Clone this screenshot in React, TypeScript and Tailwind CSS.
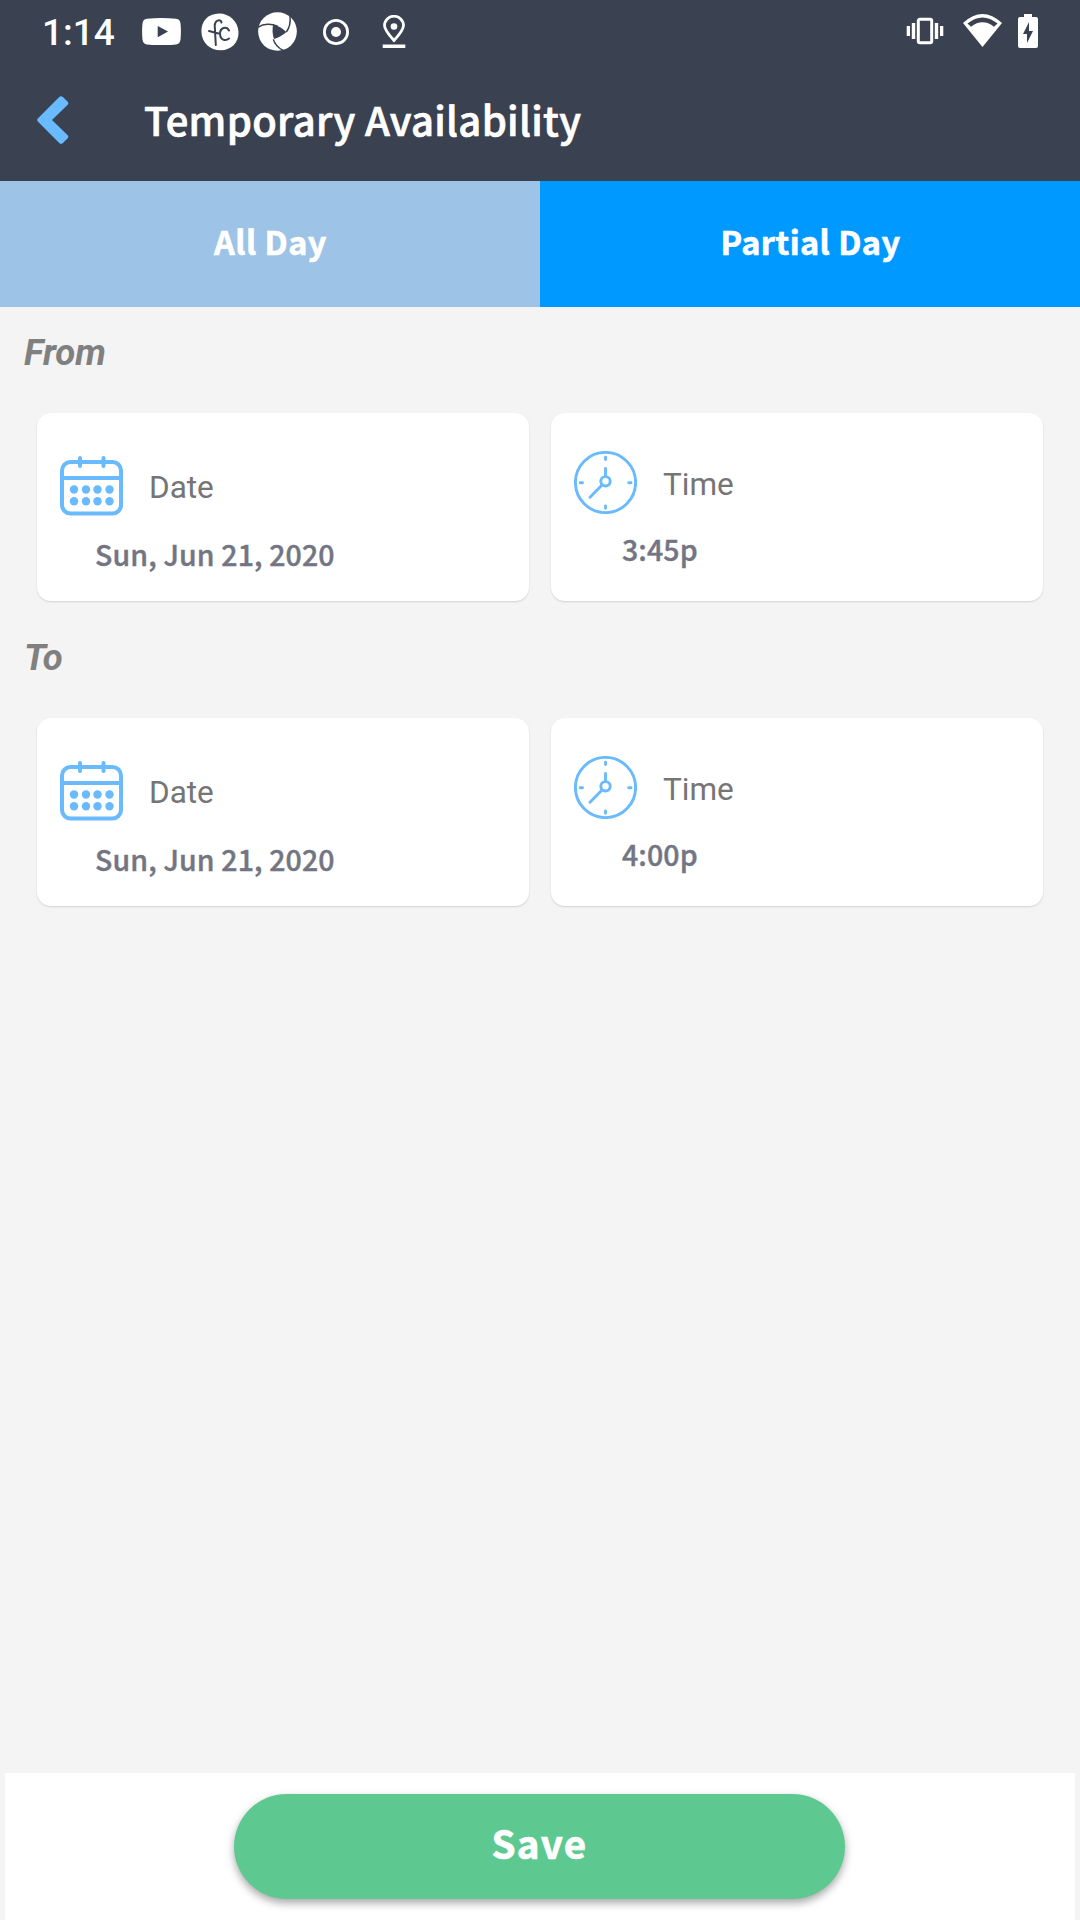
const cjk = "font-['Noto_Sans_CJK_SC',sans-serif]";

function StatusBar() {
  return (
    <div className="flex h-[63px] items-start pl-[42px] text-white">
      <span className="mt-[11px] w-[100px] text-[37px] leading-[44px] font-medium">1:14</span>
      <svg className="mt-[18px] h-[27px] w-[39px]" viewBox="0 0 39 27">
        <path fill="currentColor" fillRule="evenodd" d="M5 .7Q19.500-.7 34 .7 38 1 38.500 5.500 39.300 13.500 38.500 21.500 38 26 34 26.400 19.500 27.700 5 26.400 1 26 .5 21.500-.3 13.500.5 5.500 1 1 5 .7ZM15.700 8V19.300L26 13.600Z" />
      </svg>
      <svg className="mt-[13px] ml-5 h-[38px] w-[38px]" viewBox="0 0 38 38">
        <path fill="currentColor" d="M18 .4C28 .2 37 8 37.500 19 37.800 30 30 37 20 37.300 9 37.500 1 30 .4 19 0 8 7 .7 18 .4Z" />
        <g fill="none" stroke="#3a4150" strokeWidth="2" strokeLinecap="round">
          <path d="M20.500 9.500C20 6 14.500 6.500 13.700 12L14.800 32M8 18 17.500 20.500" />
          <path d="M28 17.500C25.500 12.500 19 15 19 20.500 19 27 24.500 28.500 28 25.500" />
        </g>
      </svg>
      <svg className="mt-3 ml-[19px] h-[39px] w-[39px]" viewBox="0 0 117 117">
        <circle cx="58.500" cy="58.500" r="58" fill="currentColor" />
        <g fill="none" stroke="#3a4150" strokeWidth="4.500">
          <path d="M0 46C16 34 40 34 60 43" />
          <path d="M96 12C98 30 94 48 85 60" />
          <path d="M76 116C62 108 50 96 46 82" />
        </g>
        <path fill="#3a4150" d="M45 38Q68 42 85 60 71 74 48 81 41 60 45 38Z" />
      </svg>
      <svg className="mt-[18px] ml-[25px] h-7 w-7" viewBox="0 0 28 28">
        <circle cx="14" cy="14" r="11.600" fill="none" stroke="currentColor" strokeWidth="2.800" />
        <circle cx="14" cy="14" r="5" fill="currentColor" />
      </svg>
      <svg className="mt-[15px] ml-8 h-[34px] w-[24px]" viewBox="0 0 24 34">
        <path fill="none" stroke="currentColor" strokeWidth="2.800" d="M12 25.500C7 20 2.500 15 2.500 10.500A9.500 9.300 0 0 1 21.500 10.500C21.500 15 17 20 12 25.500Z" />
        <circle cx="12" cy="11.500" r="3.300" fill="currentColor" />
        <path fill="currentColor" d="M.7 29.500H23.300V33H.7Z" />
      </svg>
      <svg className="mt-[17px] ml-[500px] h-7 w-[38px]" viewBox="0 0 38 28">
        <rect x="12.300" y="2.300" width="13.400" height="23.400" rx="1.500" fill="none" stroke="currentColor" strokeWidth="3" />
        <path fill="currentColor" d="M.7 9H4V19H.7ZM5.800 6H9.200V22H5.800ZM28.800 6H32.200V22H28.800ZM34 9H37.300V19H34Z" />
      </svg>
      <svg className="mt-[14px] ml-[19px] h-[33px] w-[39px]" viewBox="0 0 39 33">
        <path fill="currentColor" fillRule="evenodd" d="M0 9Q19.500-9 39 9L19.500 33ZM4.500 9.500 8 12.700Q19.500 4 31 12.700L34.500 9.500Q19.500-2.500 4.500 9.500Z" />
      </svg>
      <svg className="mt-[14px] ml-4 h-[34px] w-5" viewBox="0 0 20 34">
        <path fill="currentColor" fillRule="evenodd" d="M6 0H14V3H18Q20 3 20 5V32Q20 34 18 34H2Q0 34 0 32V5Q0 3 2 3H6ZM11 8 5 20H9V29L15 17H11Z" />
      </svg>
    </div>
  );
}

function CalendarIcon() {
  return (
    <svg className="h-[60px] w-[63px] shrink-0 text-[#69baff]" viewBox="0 0 63 60">
      <g fill="none" stroke="currentColor" strokeWidth="4">
        <rect x="2" y="6" width="59" height="51.500" rx="8.500" />
        <path d="M2 22H61" />
        <path d="M20 2V10M43.500 2V10" strokeLinecap="round" />
      </g>
      <g fill="currentColor">
        {[14, 26, 37.5, 49.5].map((x) => (
          <g key={x}>
            <circle cx={x} cy="33.500" r="4.200" />
            <circle cx={x} cy="45.300" r="4.200" />
          </g>
        ))}
      </g>
    </svg>
  );
}

function ClockIcon() {
  return (
    <svg className="h-[63px] w-[63px] shrink-0 text-[#69baff]" viewBox="0 0 63 63">
      <g fill="none" stroke="currentColor" strokeWidth="2.900" strokeLinecap="round">
        <circle cx="31.500" cy="31.500" r="30.100" />
        <circle cx="31.500" cy="30.300" r="4.700" />
        <path d="M31.500 25V17.500M28 34 16 46.200" />
        <path d="M31.500 6.200V8.500M31.500 55V57.300M6.200 31.700H8.500M54.700 31.700H57" />
      </g>
    </svg>
  );
}

const card = "h-[188px] w-[492px] rounded-[14px] bg-white pl-[23px] shadow-[0_1px_2px_rgba(0,0,0,0.14)]";
const label = "ml-[26px] text-[31.5px] leading-[40px] text-[#757575]";
const valueText = "text-[28.5px] leading-[40px] font-medium tracking-[0.12px] text-[#737582] [-webkit-text-stroke:0.4px_#737582] " + cjk;

function DateCard({ value }: { value: string }) {
  return (
    <div className={card}>
      <div className="flex h-[121px] pt-[43px]">
        <CalendarIcon />
        <span className={"mt-[12px] " + label}>Date</span>
      </div>
      <div className={"ml-[35px] " + valueText}>{value}</div>
    </div>
  );
}

function TimeCard({ value }: { value: string }) {
  return (
    <div className={card}>
      <div className="flex h-[116px] pt-[38px]">
        <ClockIcon />
        <span className={"mt-[14px] " + label}>Time</span>
      </div>
      <div className={"ml-[48px] " + valueText}>{value}</div>
    </div>
  );
}

function Section({ title, date, time }: { title: string; date: string; time: string }) {
  return (
    <section className="h-[305px] px-[37px]">
      <h2 className="-ml-[13px] h-[106px] pt-[24px] text-[36.5px] leading-[43px] font-bold text-[#808080] italic">{title}</h2>
      <div className="flex gap-[22px]">
        <DateCard value={date} />
        <TimeCard value={time} />
      </div>
    </section>
  );
}

export default function App() {
  return (
    <div className="flex h-[1920px] w-[1080px] flex-col overflow-hidden bg-[#f4f4f4] font-['Roboto',sans-serif]">
      <header className="h-[181px] bg-[#3a4150]">
        <StatusBar />
        <div className="flex items-start">
          <svg className="mt-[33px] ml-[37px] h-12 w-8 text-[#69baff]" viewBox="0 0 32 48">
            <path fill="currentColor" d="M22.500.8Q24 -.5 25.700.8L30.700 5.700Q32 7.200 30.700 8.700L15 24 30.700 39.300Q32 40.800 30.700 42.300L25.700 47.200Q24 48.500 22.500 47.200L.8 25.500Q-.5 24 .8 22.500Z" />
          </svg>
          <h1 className={"mt-[31px] ml-[75px] text-[40px] leading-[50px] font-medium tracking-[0.32px] text-white [-webkit-text-stroke:0.7px_white] " + cjk}>
            Temporary Availability
          </h1>
        </div>
      </header>
      <div className={"grid h-[126px] grid-cols-2 text-center text-[32.5px] leading-[120px] font-bold tracking-[0.45px] text-white [-webkit-text-stroke:0.6px_white] " + cjk}>
        <div className="bg-[#9dc3e6] pl-px">All Day</div>
        <div className="bg-[#0099ff] pl-px">Partial Day</div>
      </div>
      <main className="flex-1">
        <Section title="From" date="Sun, Jun 21, 2020" time="3:45p" />
        <Section title="To" date="Sun, Jun 21, 2020" time="4:00p" />
      </main>
      <footer className="mx-[5px] flex h-[147px] bg-white pt-[21px]">
        <button className={"ml-[229px] h-[105px] w-[611px] rounded-full bg-[#5dc990] pb-[8px] text-[38.5px] font-bold tracking-[1.2px] text-white shadow-[0_4px_8px_rgba(0,0,0,0.35)] [-webkit-text-stroke:0.7px_white] " + cjk}>
          Save
        </button>
      </footer>
    </div>
  );
}
